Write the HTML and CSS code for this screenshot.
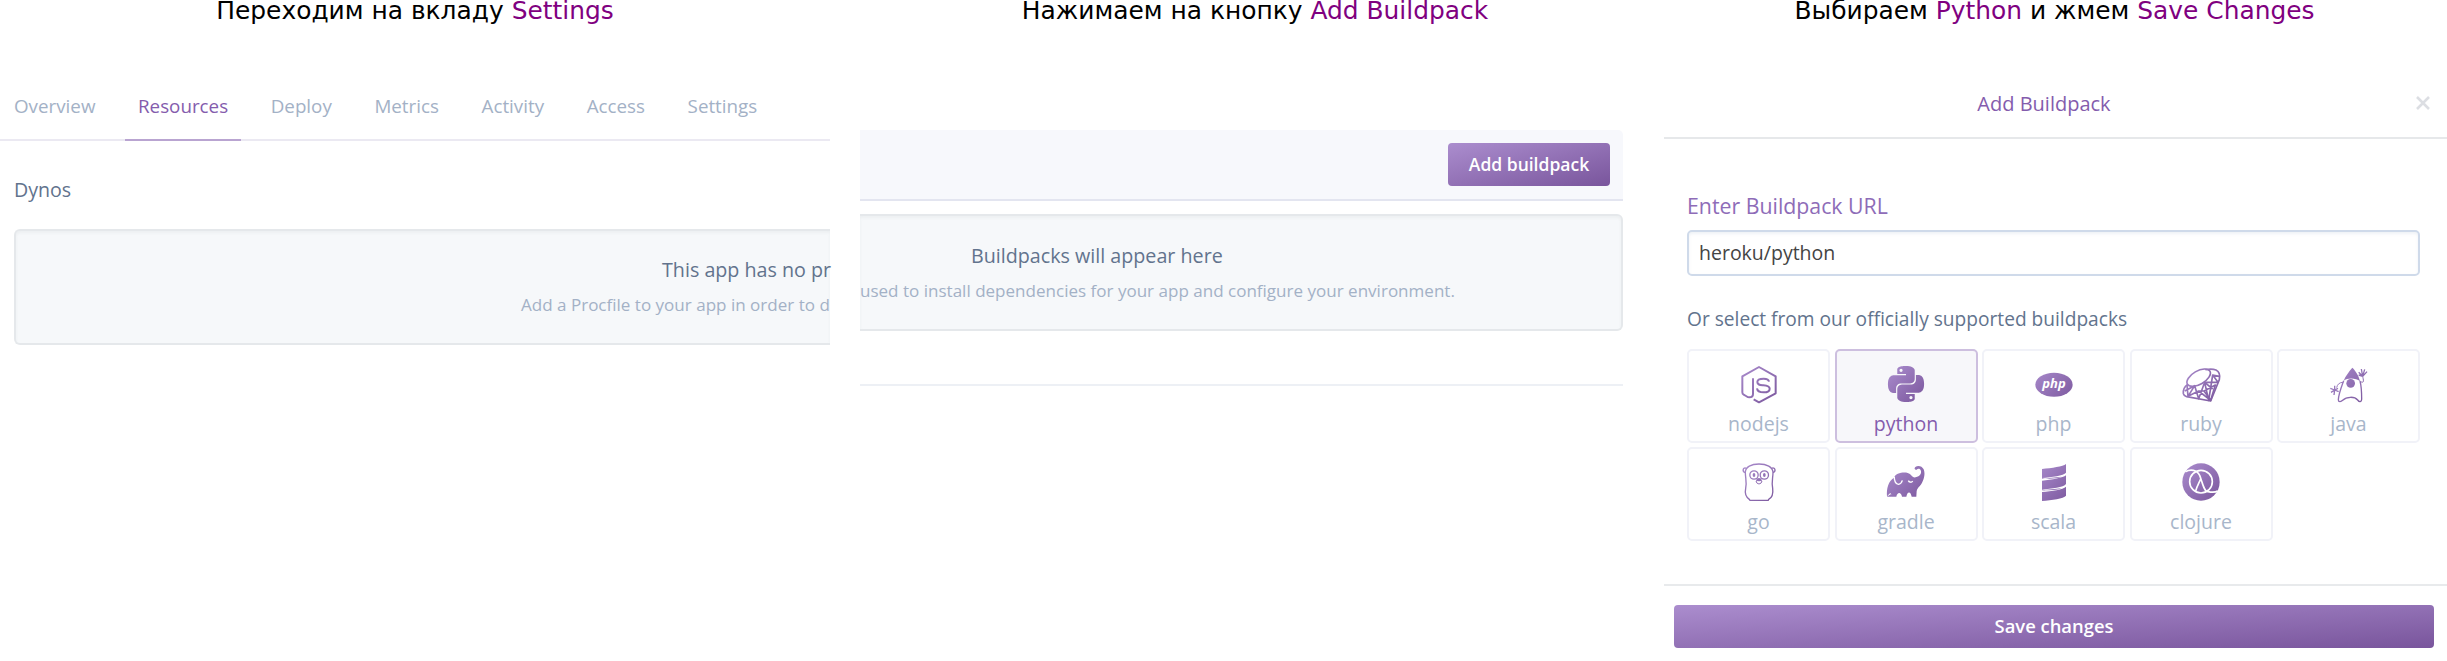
FILE: index.html
```html
<!DOCTYPE html>
<html lang="ru">
<head>
<meta charset="utf-8">
<title>Heroku buildpack</title>
<link rel="stylesheet" href="styles.css">
</head>
<body>
<svg class="defs" width="0" height="0">
  <defs>
    <linearGradient id="violet" gradientUnits="userSpaceOnUse" x1="0" y1="0" x2="114" y2="114"><stop offset="0" stop-color="#ab8dce"/><stop offset="1" stop-color="#7a569c"/></linearGradient>
    <linearGradient id="violet24" gradientUnits="userSpaceOnUse" x1="0" y1="0" x2="24" y2="24"><stop offset="0" stop-color="#ab8dce"/><stop offset="1" stop-color="#7a569c"/></linearGradient>
  </defs>
</svg>
<main class="steps">
  <section class="step step-tabs">
    <h2 class="caption">Переходим на вкладу <em>Settings</em></h2>
    <nav class="tabs">
      <a>Overview</a><a class="active">Resources</a><a>Deploy</a><a>Metrics</a><a>Activity</a><a>Access</a><a>Settings</a>
    </nav>
    <h3 class="dynos">Dynos</h3>
    <div class="well well-left">
      <p class="well-title">This app has no pr</p>
      <p class="well-text">Add a Procfile to your app in order to d</p>
    </div>
  </section>

  <section class="step step-add">
    <h2 class="caption">Нажимаем на кнопку <em>Add Buildpack</em></h2>
    <div class="shot">
      <div class="toolbar"><button class="btn">Add buildpack</button></div>
      <div class="well well-right">
        <p class="well-title">Buildpacks will appear here</p>
        <p class="well-text">used to install dependencies for your app and configure your environment.</p>
      </div>
      <hr class="rule">
    </div>
  </section>

  <section class="step step-modal">
    <h2 class="caption">Выбираем <em>Python</em> и жмем <em>Save Changes</em></h2>
    <header class="modal-head">
      <span class="modal-title">Add Buildpack</span>
      <svg class="close" viewBox="0 0 14 14"><path d="M1 1L13 13M13 1L1 13"/></svg>
    </header>
    <div class="modal-body">
      <div class="label">Enter Buildpack URL</div>
      <div class="field">heroku/python</div>
      <div class="hint">Or select from our officially supported buildpacks</div>
      <div class="tiles">
        <div class="tile">
          <svg class="icon" viewBox="0 0 114 114"><g class="line w6"><path d="M39 40V87Q39 97 28 97Q24 97 18 93L11 89Q7 87 7 82V34L57 6L107 34V85L57 112L41 103"/><path d="M87 50C86 42 80 41 71 41C60 41 52 43 52 51C52 60 60 60 70 61C80 62 89 63 89 71C89 80 81 82 71 82C59 82 52 79 51 70"/></g></svg>
          <span>nodejs</span>
        </div>
        <div class="tile selected">
          <svg class="icon" viewBox="0 0 24 24"><path fill="url(#violet24)" d="M14.25.18l.9.2.73.26.59.3.45.32.34.34.25.34.16.33.1.3.04.26.02.2-.01.13V8.5l-.05.63-.13.55-.21.46-.26.38-.3.31-.33.25-.35.19-.35.14-.33.1-.3.07-.26.04-.21.02H8.77l-.69.05-.59.14-.5.22-.41.27-.33.32-.27.35-.2.36-.15.37-.1.35-.07.32-.04.27-.02.21v3.06H3.17l-.21-.03-.28-.07-.32-.12-.35-.18-.36-.26-.36-.36-.35-.46-.32-.59-.28-.73-.21-.88-.14-1.05-.05-1.23.06-1.22.16-1.04.24-.87.32-.71.36-.57.4-.44.42-.33.42-.24.4-.16.36-.1.32-.05.24-.01h.16l.06.01h8.16v-.83H6.18l-.01-2.75-.02-.37.05-.34.11-.31.17-.28.25-.26.31-.23.38-.2.44-.18.51-.15.58-.12.64-.1.71-.06.77-.04.84-.02 1.27.05zm-6.3 1.98l-.23.33-.08.41.08.41.23.34.33.22.41.09.41-.09.33-.22.23-.34.08-.41-.08-.41-.23-.33-.33-.22-.41-.09-.41.09zm13.09 3.95l.28.06.32.12.35.18.36.27.36.35.35.47.32.59.28.73.21.88.14 1.04.05 1.23-.06 1.23-.16 1.04-.24.86-.32.71-.36.57-.4.45-.42.33-.42.24-.4.16-.36.09-.32.05-.24.02-.16-.01h-8.22v.82h5.84l.01 2.76.02.36-.05.34-.11.31-.17.29-.25.25-.31.24-.38.2-.44.17-.51.15-.58.13-.64.09-.71.07-.77.04-.84.01-1.27-.04-1.07-.14-.9-.2-.73-.25-.59-.3-.45-.33-.34-.34-.25-.34-.16-.33-.1-.3-.04-.25-.02-.2.01-.13v-5.34l.05-.64.13-.54.21-.46.26-.38.3-.32.33-.24.35-.2.35-.14.33-.1.3-.06.26-.04.21-.02.13-.01h5.84l.69-.05.59-.14.5-.21.41-.28.33-.32.27-.35.2-.36.15-.36.1-.35.07-.32.04-.28.02-.21V6.07h2.09l.14.01zm-6.47 14.25l-.23.33-.08.41.08.41.23.33.33.23.41.08.41-.08.33-.23.23-.33.08-.41-.08-.41-.23-.33-.33-.23-.41-.08-.41.08z"/></svg>
          <span>python</span>
        </div>
        <div class="tile">
          <svg class="icon" viewBox="0 0 114 114"><ellipse cx="57" cy="59" rx="56" ry="36" fill="url(#violet)"/><text class="php" x="57" y="69" text-anchor="middle">php</text></svg>
          <span>php</span>
        </div>
        <div class="tile">
          <svg class="icon" viewBox="0 0 114 114"><g class="line w5"><ellipse cx="50" cy="38" rx="39" ry="20" transform="rotate(-30 50 38)"/><path d="M17 58C8 64 3 76 4 86Q5 92 14 95L86 108L112 44C115 30 112 20 102 15C92 11 80 12 70 14"/><path d="M15 60L18 94L38 62L50 101L68 52L80 106L92 30L108 52L68 52M18 94L50 78L86 106L66 78L50 78M66 78L100 60L86 106M38 62L8 78M92 30L112 34M68 52L92 72"/></g></svg>
          <span>ruby</span>
        </div>
        <div class="tile">
          <svg class="icon" viewBox="0 0 114 114"><path fill="url(#violet)" d="M67 8C58 18 46 34 41 47C52 38 78 38 90 49C88 36 78 18 67 8Z"/><circle cx="62" cy="55" r="13" fill="url(#violet)"/><g class="line w4"><path d="M41 47C34 66 26 86 25 104C25 112 33 111 38 106C50 94 74 94 83 105C88 112 95 111 95 103C95 84 95 66 90 48"/><path class="w3" d="M40 52C28 52 22 58 20 68M92 50C104 56 100 44 98 34"/><path d="M1 70L14 75L24 70M14 62L14 75L12 90M3 82L14 75L26 80M98 34L86 22M98 34L94 12M98 34L104 13M98 34L111 20M98 34L86 30"/></g></svg>
          <span>java</span>
        </div>
        <div class="tile">
          <svg class="icon" viewBox="0 0 114 114"><g class="line w4"><path d="M16 28C16 12 34 3 57 3C80 3 98 12 99 28C99 46 94 56 98 76C100 92 96 104 86 109L85 112H30L28 109C18 102 14 90 17 76C21 56 16 46 16 28Z"/><path d="M19 16C10 11 5 24 15 29M95 16C104 11 110 24 99 29"/><circle cx="42" cy="36" r="12.500"/><circle cx="73" cy="36" r="12.500"/><path class="w3" d="M48 54Q49 62 57 63Q65 62 66 54Q57 46 48 54Z"/></g><g fill="url(#violet)"><ellipse cx="42" cy="36" rx="4" ry="6"/><ellipse cx="73" cy="36" rx="4" ry="6"/><ellipse cx="57" cy="50" rx="8" ry="5"/></g></svg>
          <span>go</span>
        </div>
        <div class="tile">
          <svg class="icon" viewBox="0 0 114 114"><path fill="url(#violet)" d="M0 101C-2 76 4 54 21 44C24 32 48 26 62 30C74 33 74 45 86 43C99 41 105 30 101 22C98 16 92 17 89 20C84 22 80 16 85 12C92 6 105 8 110 19C116 34 110 52 103 63C97 72 90 76 89 84L88 101H74C71 84 61 84 58 101H45C42 86 31 86 28 101H14C13 90 12 92 0 101V101H14C12 84 8 92 0 101Z"/><path class="cut w4" d="M22 41C21 52 26 64 34 64C41 63 44 60 46 52M64 53C67 59 74 59 77 54"/></svg>
          <span>gradle</span>
        </div>
        <div class="tile">
          <svg class="icon" viewBox="0 0 114 114"><path fill="url(#violet)" d="M21 18C50 15 84 11 93 3V29C86 38 50 42 21 45ZM21 53C50 50 84 45 93 37V63C86 73 50 77 21 80ZM21 87C50 84 84 80 93 71V98C86 107 50 111 21 114Z"/><path fill="url(#violet)" d="M21 45C40 48 60 48 80 41L21 47ZM21 80C40 83 60 83 80 76L21 82Z"/></svg>
          <span>scala</span>
        </div>
        <div class="tile">
          <svg class="icon" viewBox="0 0 114 114"><circle cx="57" cy="57" r="56" fill="url(#violet)"/><g class="cut w5"><circle cx="57" cy="56" r="34"/><path d="M10 26C26 18 44 20 53 37C60 54 66 88 78 86C88 88 98 90 107 84M56 48C50 62 44 72 41 84"/></g></svg>
          <span>clojure</span>
        </div>
      </div>
    </div>
    <footer class="modal-foot"><button class="btn btn-wide">Save changes</button></footer>
  </section>
</main>
</body>
</html>
```
FILE: styles.css
```css
* { box-sizing: border-box; margin: 0; padding: 0; }
body {
  background: #fff;
  font-family: "Open Sans", "Noto Sans", sans-serif;
  font-size: 19.5px;
  color: #62738d;
}
.defs { position: absolute; }
.steps { display: flex; width: 2447px; height: 661px; }
.step { display: flex; flex-direction: column; }
.step-tabs { width: 830px; }
.step-add { width: 834px; }
.step-modal { width: 783px; }

.caption {
  height: 21px;
  line-height: 22px;
  font-family: "DejaVu Sans", sans-serif;
  font-size: 24.9px;
  font-weight: 400;
  color: #000;
  text-align: center;
  white-space: nowrap;
}
.caption em { font-style: normal; color: #800080; }
.step-add .caption { padding-left: 16px; }
.step-modal .caption { padding-right: 2px; }

.tabs {
  display: flex;
  gap: 16.6px;
  height: 120px;
  padding: 50px 0 0 1px;
  border-bottom: 2px solid #ebe9f2;
  line-height: 71px;
  font-size: 18.8px;
  color: #a3b1c6;
}
.tabs a { height: 70px; padding: 0 13px; }
.tabs .active { color: #845cad; border-bottom: 2px solid #b9a4d1; }

.dynos { margin: 33px 0 0 14px; line-height: 32px; font-size: 19.6px; font-weight: 400; }

.well {
  height: 116px;
  background: #f6f8fa;
  border: 2px solid #e5e8eb;
  box-shadow: inset 0 2px 3px rgba(90, 100, 110, .06);
  white-space: nowrap;
}
.well-title { font-size: 19.7px; line-height: 34px; }
.well-text { font-size: 17.05px; line-height: 35px; color: #a3b1c6; }
.well-left { margin: 22.500px 0 0 14px; padding-top: 22px; border-right: 0; border-radius: 6px 0 0 6px; }
.well-left .well-title { padding-left: 646px; }
.well-left .well-text { padding-left: 505px; }

.shot { width: 763px; margin: 109px 0 0 30px; }
.toolbar {
  display: flex;
  justify-content: flex-end;
  height: 71px;
  padding: 13px 13px 0 0;
  background: #f7f8fc;
  border-bottom: 2px solid #e3e5f0;
  border-radius: 0 5px 0 0;
}
.btn {
  width: 162px;
  height: 43px;
  border: 0;
  border-radius: 4px;
  background: linear-gradient(to bottom right, #ab8dce, #79559c);
  color: #fff;
  font: 600 17.5px/43px "Open Sans", "Noto Sans", sans-serif;
}
.well-right { margin-top: 13px; height: 117px; padding-top: 23px; border-left: 0; border-radius: 0 6px 6px 0; }
.well-right .well-title { padding-left: 111px; }
.rule { margin-top: 53px; border: 0; border-top: 2px solid #edf0f5; }

.modal-head {
  display: flex;
  justify-content: flex-end;
  align-items: center;
  height: 118px;
  padding: 50px 17px 0 0;
  border-bottom: 2px solid #e6e8ea;
}
.modal-title { flex: 1; padding-left: 8px; text-align: center; line-height: 34px; font-size: 20px; color: #845cad; }
.close { width: 14px; height: 14px; margin-bottom: 2px; fill: none; stroke: #dcdee3; stroke-width: 2.6; }
.modal-body { height: 445px; padding: 50px 27px 0 23px; }
.label { line-height: 34px; font-size: 21.3px; color: #8e6cb8; }
.field {
  height: 46px;
  margin-top: 7px;
  padding-left: 10px;
  border: 2px solid #cfdaea;
  border-radius: 5px;
  box-shadow: inset 0 2px 3px rgba(100, 130, 170, .1);
  line-height: 42px;
  color: #444;
}
.hint { margin-top: 27px; line-height: 32px; font-size: 19.15px; }
.tiles { display: grid; grid-template-columns: repeat(5, 1fr); gap: 4px 4.500px; margin-top: 14px; }
.tile {
  display: flex;
  flex-direction: column;
  align-items: center;
  height: 94px;
  padding-top: 13.500px;
  border: 2px solid #f1f2f8;
  border-radius: 5px;
  color: #a8b6ca;
  line-height: 41px;
}
.tile.selected { background: #f7f7fa; border-color: #cdbfdf; color: #845cad; }
.icon { width: 38px; height: 38px; flex: none; overflow: visible; }
.selected .icon { width: 36px; height: 38px; }
.line { fill: none; stroke: url(#violet); stroke-linejoin: round; }
.cut { fill: none; stroke: #fff; }
.w3 { stroke-width: 3; }
.w4 { stroke-width: 4; }
.w5 { stroke-width: 5; }
.w6 { stroke-width: 6; }
.php { fill: #fff; font: italic 700 39px "Open Sans", sans-serif; }
.modal-foot { padding: 18.500px 13px 0 10px; border-top: 2px solid #e8eaec; }
.btn-wide { width: 760px; height: 43px; font-size: 18.4px; line-height: 42px; }
```
